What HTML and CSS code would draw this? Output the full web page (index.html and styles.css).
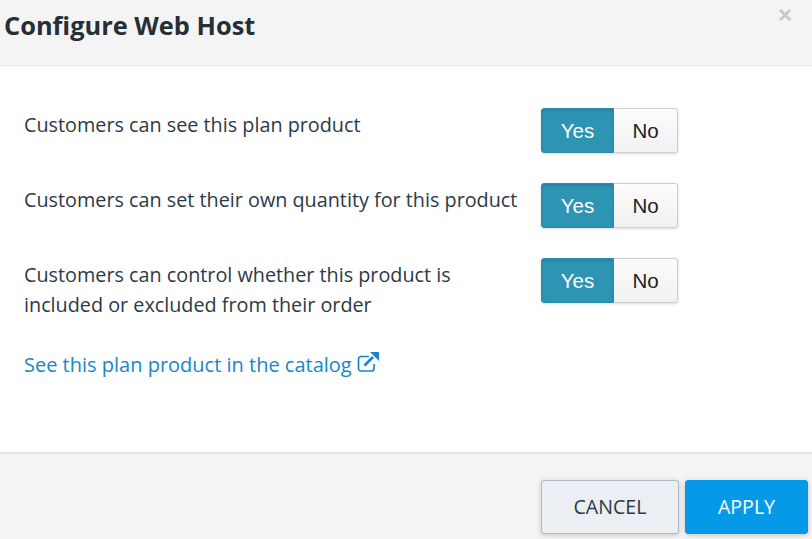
FILE: index.html
```html
<!DOCTYPE html>
<html>
    <head>
        <meta charset="UTF-8">
        <meta name="viewport" content="width = device-width, initial-scale = 1.0">
        <title>Configure Web Host</title>
        <link rel="stylesheet" href="styles.css">
    </head>
    <body>
        <div class="modal">
            <div class="modal-header">
                <h1 class="modal-title">Configure Web Host</h1>
                <span class="close">&times;</span>
            </div>
            <div class="modal-body">
                <div class="option">
                    <div class="option-label">Customers can see this plan product</div>
                    <div class="toggle">
                        <button class="toggle-btn active">Yes</button>
                        <button class="toggle-btn">No</button>
                    </div>
                </div>
                <div class="option">
                    <div class="option-label">Customers can set their own quantity for this product</div>
                    <div class="toggle">
                        <button class="toggle-btn active">Yes</button>
                        <button class="toggle-btn">No</button>
                    </div>
                </div>
                <div class="option">
                    <div class="option-label">Customers can control whether this product is<br>included or excluded from their order</div>
                    <div class="toggle">
                        <button class="toggle-btn active">Yes</button>
                        <button class="toggle-btn">No</button>
                    </div>
                </div>
                <a class="catalog-link" href="#">See this plan product in the catalog
                    <svg class="external-icon" width="23" height="21" viewBox="0 0 23 21">
                        <path d="M17 12v4.500a2.500 2.500 0 0 1-2.500 2.500H4a2.500 2.500 0 0 1-2.500-2.500V7A2.500 2.500 0 0 1 4 4.500h8" fill="none" stroke="#1a86c8" stroke-width="1.700"/>
                        <path d="M7.500 13.500L16 5" fill="none" stroke="#1a86c8" stroke-width="2.600"/>
                        <path d="M13 0h9v9z" fill="#1a86c8"/>
                    </svg>
                </a>
            </div>
            <div class="modal-footer">
                <button class="btn btn-cancel">CANCEL</button>
                <button class="btn btn-apply">APPLY</button>
            </div>
        </div>
    </body>
</html>
```

FILE: styles.css
```css
* {
  box-sizing: border-box;
}

body {
  margin: 0;
  background: #fff;
  color: #2b3a47;
  font-family: "Open Sans", "Noto Sans", sans-serif;
}

.modal {
  height: 539px;
  display: flex;
  flex-direction: column;
  overflow: hidden;
}

.modal-header {
  height: 66px;
  flex: none;
  display: flex;
  justify-content: space-between;
  align-items: flex-start;
  padding: 7px 19px 0 4px;
  background: #f4f4f4;
  border-bottom: 1px solid #e8e8e8;
}

.modal-title {
  margin: 0;
  font-size: 25.4px;
  line-height: 36px;
  font-weight: 700;
  color: #262f36;
}

.close {
  font-size: 24px;
  line-height: 16px;
  margin-right: 1px;
  color: #c8c8c8;
  font-family: "Liberation Sans", sans-serif;
  font-weight: 700;
}

.modal-body {
  flex: 1;
  padding: 42px 134px 0 24px;
  display: flex;
  flex-direction: column;
}

.option {
  display: flex;
  justify-content: space-between;
  align-items: flex-start;
  margin-bottom: 30px;
  font-size: 19.8px;
  line-height: 30px;
}

.option-label {
  padding-top: 2px;
}

.toggle {
  display: flex;
  width: 137px;
  height: 45px;
  flex: none;
  border-radius: 3px;
  box-shadow: 0 1px 3px rgba(0, 0, 0, 0.15);
}

.toggle-btn {
  width: 64px;
  padding: 1px 0 0;
  border: 1px solid #cfcfcf;
  border-left: 0;
  border-radius: 0 3px 3px 0;
  background: linear-gradient(to bottom, #fcfcfc, #f1f1f1);
  color: #222;
  font-family: "Liberation Sans", sans-serif;
  font-size: 20.5px;
}

.toggle-btn.active {
  width: 73px;
  border: 1px solid #2a8aa8;
  border-radius: 3px 0 0 3px;
  background: #2e94b4;
  color: #fff;
  box-shadow: inset 0 2px 3px rgba(0, 0, 0, 0.12);
}

.catalog-link {
  font-size: 20px;
  line-height: 30px;
  color: #1a86c8;
  text-decoration: none;
}

.external-icon {
  vertical-align: -1px;
}

.modal-footer {
  height: 87px;
  flex: none;
  display: flex;
  justify-content: flex-end;
  gap: 6px;
  padding: 26px 4px 0 0;
  background: #f4f4f4;
  border-top: 2px solid #e6e6e6;
}

.btn {
  height: 54px;
  padding: 0 0 2px;
  border-radius: 3px;
  font-family: "Open Sans", "Noto Sans", sans-serif;
  font-size: 19.6px;
  box-shadow: 0 1px 5px rgba(0, 0, 0, 0.2);
}

.btn-cancel {
  width: 138px;
  border: 1px solid #aebbc6;
  background: #ebeef2;
  color: #2b3a47;
}

.btn-apply {
  width: 123px;
  border: 1px solid #0598e6;
  background: #0599e8;
  color: #fff;
}
```
